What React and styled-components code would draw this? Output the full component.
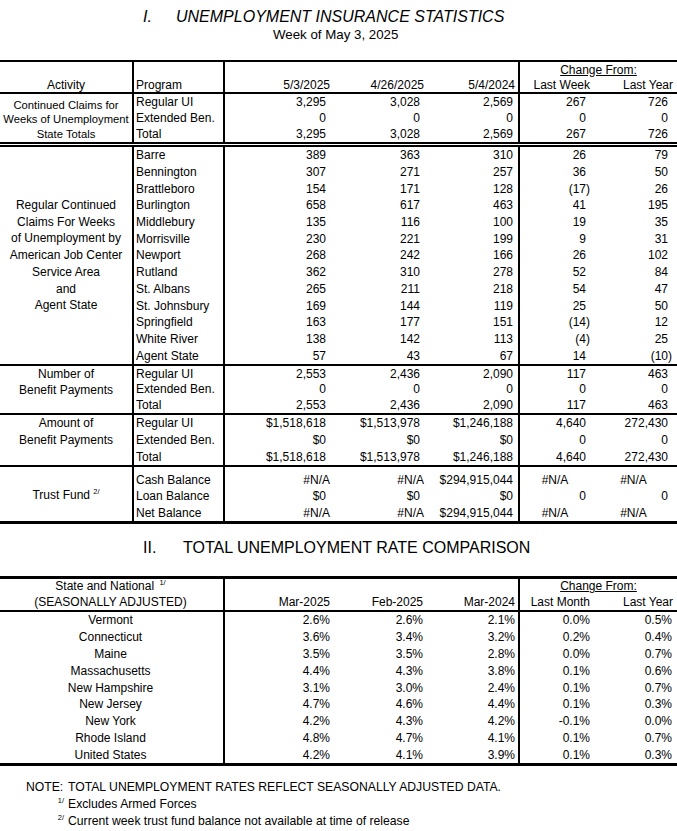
import React from 'react';
import styled, { createGlobalStyle } from 'styled-components';

const GlobalStyle = createGlobalStyle`
  html, body {
    margin: 0;
    padding: 0;
    background: #fff;
  }
  body {
    font-family: "Liberation Sans", Arial, sans-serif;
    color: #000;
  }
`;

const Page = styled.div`
  width: 677px;
  padding-top: 8px;
  font-size: 12px;
`;

const Heading = styled.div`
  display: flex;
  padding-left: 143px;
  margin-top: ${p => p.$mt || 0}px;
  font-size: 16px;
  line-height: 18px;
  font-style: ${p => (p.$italic ? 'italic' : 'normal')};
  white-space: nowrap;
`;

const Roman = styled.span`
  width: ${p => p.$w}px;
`;

const WeekOf = styled.div`
  padding-left: 273px;
  font-size: 13.3px;
  line-height: 18px;
`;

const Sheet = styled.div`
  margin-top: ${p => p.$mt}px;
  border-top: ${p => p.$top}px solid #000;
`;

const Block = styled.div`
  display: grid;
  grid-template-columns: 134px 91px 108px 94px 93px 80px 77px;
  grid-template-rows: ${p => p.$rows || 'none'};
  grid-auto-rows: ${p => p.$row || 16}px;
  border-bottom: ${p => p.$line || '2px solid #000'};
  line-height: 14px;
`;

const Activity = styled.div`
  grid-column: 1;
  grid-row: 1 / span ${p => p.$span};
  display: flex;
  flex-direction: column;
  align-items: center;
  justify-content: ${p => (p.$top ? 'flex-start' : 'center')};
  padding-top: ${p => p.$pt || 0}px;
  border-right: 2px solid #000;
  font-size: ${p => p.$size || 12}px;
  line-height: ${p => p.$lh || 16.7}px;
  text-align: center;
  white-space: nowrap;
`;

const Program = styled.div`
  grid-column: 2;
  display: flex;
  align-items: center;
  padding: ${p => p.$pt || 0}px 0 0 2px;
  border-right: 2px solid #000;
  white-space: nowrap;
`;

const Value = styled.div`
  display: flex;
  align-items: center;
  justify-content: ${p => (p.$center ? 'center' : 'flex-end')};
  padding-top: ${p => p.$pt || 0}px;
  padding-right: ${p => p.$pad}px;
  border-right: ${p => (p.$rule ? '2px solid #000' : 'none')};
  white-space: nowrap;
`;

const State = styled.div`
  grid-column: 1 / span 2;
  display: flex;
  align-items: center;
  justify-content: center;
  padding-right: 2px;
  border-right: 2px solid #000;
  white-space: nowrap;
`;

const HeadCell = styled.div`
  grid-column: ${p => p.$col || 'auto'};
  display: flex;
  align-items: ${p => (p.$bottom ? 'flex-end' : 'center')};
  justify-content: ${p => ({ left: 'flex-start', center: 'center', right: 'flex-end' }[p.$align || 'right'])};
  padding: 0 ${p => p.$pr || 0}px 0 ${p => p.$pl || 0}px;
  border-right: ${p => (p.$rule ? '2px solid #000' : 'none')};
  white-space: nowrap;
`;

const ChangeFrom = styled.div`
  grid-column: 6 / span 2;
  display: flex;
  align-items: center;
  justify-content: center;
  text-decoration: underline;
  text-underline-offset: 1px;
`;

const Sup = styled.sup`
  font-size: 7.5px;
  line-height: 0;
  vertical-align: 5px;
  margin-left: ${p => p.$ml || 0}px;
`;

const Notes = styled.div`
  margin-top: 13px;
  padding-left: 26px;
  font-size: 12.2px;
  line-height: 17px;
`;

const NoteLine = styled.div`
  display: grid;
  grid-template-columns: 42px 1fr;
`;

const NoteMark = styled.span`
  text-align: ${p => (p.$right ? 'right' : 'left')};
  padding-right: ${p => (p.$right ? 4 : 0)}px;
`;

const VALUE_PAD = [7, 7, 5, 14, 9];
const HEAD_PAD = [3, 3, 3, 10, 4];
const PCT_PAD = [3, 4, 3, 10, 5];

const DataRow = ({ label, vals, pt }) => (
  <>
    <Program $pt={pt}>{label}</Program>
    {vals.map((v, i) => {
      const na = v === '#N/A';
      const neg = v.startsWith('(');
      const pad = na ? (i >= 3 ? 10 : HEAD_PAD[i]) : VALUE_PAD[i] - (neg ? 4 : 0);
      return (
        <Value key={i} $pad={pad} $center={na && i >= 3} $rule={i === 2} $pt={pt}>
          {v}
        </Value>
      );
    })}
  </>
);

const continued = [
  ['Regular UI', ['3,295', '3,028', '2,569', '267', '726']],
  ['Extended Ben.', ['0', '0', '0', '0', '0']],
  ['Total', ['3,295', '3,028', '2,569', '267', '726']],
];

const regions = [
  ['Barre', ['389', '363', '310', '26', '79']],
  ['Bennington', ['307', '271', '257', '36', '50']],
  ['Brattleboro', ['154', '171', '128', '(17)', '26']],
  ['Burlington', ['658', '617', '463', '41', '195']],
  ['Middlebury', ['135', '116', '100', '19', '35']],
  ['Morrisville', ['230', '221', '199', '9', '31']],
  ['Newport', ['268', '242', '166', '26', '102']],
  ['Rutland', ['362', '310', '278', '52', '84']],
  ['St. Albans', ['265', '211', '218', '54', '47']],
  ['St. Johnsbury', ['169', '144', '119', '25', '50']],
  ['Springfield', ['163', '177', '151', '(14)', '12']],
  ['White River', ['138', '142', '113', '(4)', '25']],
  ['Agent State', ['57', '43', '67', '14', '(10)']],
];

const payments = [
  ['Regular UI', ['2,553', '2,436', '2,090', '117', '463']],
  ['Extended Ben.', ['0', '0', '0', '0', '0']],
  ['Total', ['2,553', '2,436', '2,090', '117', '463']],
];

const amounts = [
  ['Regular UI', ['$1,518,618', '$1,513,978', '$1,246,188', '4,640', '272,430']],
  ['Extended Ben.', ['$0', '$0', '$0', '0', '0']],
  ['Total', ['$1,518,618', '$1,513,978', '$1,246,188', '4,640', '272,430']],
];

const trust = [
  ['Cash Balance', ['#N/A', '#N/A', '$294,915,044', '#N/A', '#N/A']],
  ['Loan Balance', ['$0', '$0', '$0', '0', '0']],
  ['Net Balance', ['#N/A', '#N/A', '$294,915,044', '#N/A', '#N/A']],
];

const rates = [
  ['Vermont', ['2.6%', '2.6%', '2.1%', '0.0%', '0.5%']],
  ['Connecticut', ['3.6%', '3.4%', '3.2%', '0.2%', '0.4%']],
  ['Maine', ['3.5%', '3.5%', '2.8%', '0.0%', '0.7%']],
  ['Massachusetts', ['4.4%', '4.3%', '3.8%', '0.1%', '0.6%']],
  ['New Hampshire', ['3.1%', '3.0%', '2.4%', '0.1%', '0.7%']],
  ['New Jersey', ['4.7%', '4.6%', '4.4%', '0.1%', '0.3%']],
  ['New York', ['4.2%', '4.3%', '4.2%', '-0.1%', '0.0%']],
  ['Rhode Island', ['4.8%', '4.7%', '4.1%', '0.1%', '0.7%']],
  ['United States', ['4.2%', '4.1%', '3.9%', '0.1%', '0.3%']],
];

const App = () => (
  <Page>
    <GlobalStyle />
    <Heading $italic>
      <Roman $w={33}>I.</Roman>
      <span>UNEMPLOYMENT INSURANCE STATISTICS</span>
    </Heading>
    <WeekOf>Week of May 3, 2025</WeekOf>

    <Sheet $mt={16} $top={2}>
      <Block $row={15}>
        <HeadCell $rule />
        <HeadCell $rule />
        <HeadCell />
        <HeadCell />
        <HeadCell $rule />
        <ChangeFrom>Change From:</ChangeFrom>
        <HeadCell $align="center" $rule $bottom>Activity</HeadCell>
        <HeadCell $align="left" $pl={2} $rule $bottom>Program</HeadCell>
        <HeadCell $pr={HEAD_PAD[0]} $bottom>5/3/2025</HeadCell>
        <HeadCell $pr={HEAD_PAD[1]} $bottom>4/26/2025</HeadCell>
        <HeadCell $pr={HEAD_PAD[2]} $rule $bottom>5/4/2024</HeadCell>
        <HeadCell $pr={HEAD_PAD[3]} $bottom>Last Week</HeadCell>
        <HeadCell $pr={HEAD_PAD[4]} $bottom>Last Year</HeadCell>
      </Block>

      <Block $row={16} $line="5px double #000">
        <Activity $span={3} $size={11.25} $lh={14.5} $pt={3}>
          Continued Claims for<br />Weeks of Unemployment<br />State Totals
        </Activity>
        {continued.map(([l, v]) => <DataRow key={l} label={l} vals={v} />)}
      </Block>

      <Block $row={16.7}>
        <Activity $span={13}>
          Regular Continued<br />Claims For Weeks<br />of Unemployment by<br />
          American Job Center<br />Service Area<br />and<br />Agent State
        </Activity>
        {regions.map(([l, v]) => <DataRow key={l} label={l} vals={v} />)}
      </Block>

      <Block $row={15.7}>
        <Activity $span={3} $top $lh={16.5}>
          Number of<br />Benefit Payments
        </Activity>
        {payments.map(([l, v]) => <DataRow key={l} label={l} vals={v} />)}
      </Block>

      <Block $row={16.67}>
        <Activity $span={3} $top $lh={16.5}>
          Amount of<br />Benefit Payments
        </Activity>
        {amounts.map(([l, v]) => <DataRow key={l} label={l} vals={v} />)}
      </Block>

      <Block $rows="21px 17px 16px" $line="3px solid #000">
        <Activity $span={3} $pt={3}>
          <span>Trust Fund <Sup>2/</Sup></span>
        </Activity>
        {trust.map(([l, v], i) => <DataRow key={l} label={l} vals={v} pt={i === 0 ? 5 : 0} />)}
      </Block>
    </Sheet>

    <Heading $mt={15}>
      <Roman $w={40}>II.</Roman>
      <span>TOTAL UNEMPLOYMENT RATE COMPARISON</span>
    </Heading>

    <Sheet $mt={19} $top={3}>
      <Block $rows="15px 16px">
        <State>
          <span>State and National <Sup $ml={2}>1/</Sup></span>
        </State>
        <HeadCell />
        <HeadCell />
        <HeadCell $rule />
        <ChangeFrom>Change From:</ChangeFrom>
        <State>(SEASONALLY ADJUSTED)</State>
        <HeadCell $pr={PCT_PAD[0]}>Mar-2025</HeadCell>
        <HeadCell $pr={PCT_PAD[1]}>Feb-2025</HeadCell>
        <HeadCell $pr={PCT_PAD[2]} $rule>Mar-2024</HeadCell>
        <HeadCell $pr={PCT_PAD[3]}>Last Month</HeadCell>
        <HeadCell $pr={4}>Last Year</HeadCell>
      </Block>

      <Block $row={16.8} $line="3px solid #000">
        {rates.map(([name, vals]) => (
          <React.Fragment key={name}>
            <State>{name}</State>
            {vals.map((v, i) => (
              <Value key={i} $pad={PCT_PAD[i]} $rule={i === 2}>{v}</Value>
            ))}
          </React.Fragment>
        ))}
      </Block>
    </Sheet>

    <Notes>
      <NoteLine>
        <NoteMark>NOTE:</NoteMark>
        <span>TOTAL UNEMPLOYMENT RATES REFLECT SEASONALLY ADJUSTED DATA.</span>
      </NoteLine>
      <NoteLine>
        <NoteMark $right><Sup>1/</Sup></NoteMark>
        <span>Excludes Armed Forces</span>
      </NoteLine>
      <NoteLine>
        <NoteMark $right><Sup>2/</Sup></NoteMark>
        <span>Current week trust fund balance not available at time of release</span>
      </NoteLine>
    </Notes>
  </Page>
);

export default App;
